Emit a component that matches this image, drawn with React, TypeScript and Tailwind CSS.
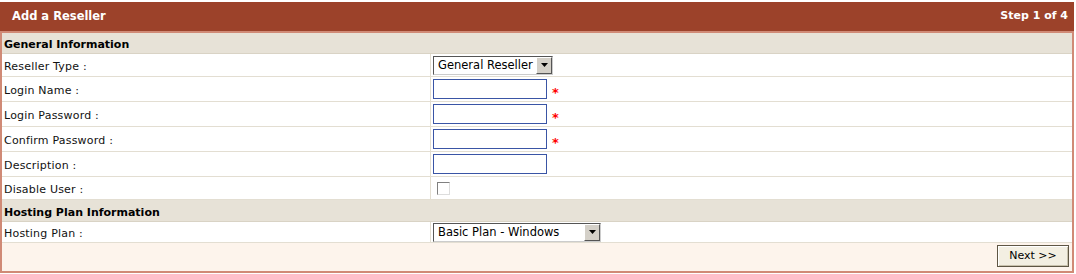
import React from 'react';

const font = { fontFamily: 'Verdana, "DejaVu Sans", sans-serif' };

const Row: React.FC<{ label: string; h: string; children?: React.ReactNode }> = ({ label, h, children }) => (
  <div className={`flex ${h} border-b border-[#e3ded2] bg-white`}>
    <div className="w-[429px] shrink-0 border-r border-[#e3ded2] flex items-center pl-[2px] pt-[4px] text-[11px] text-[#111] tracking-[0.2px]">
      {label}
    </div>
    <div className="flex items-center pl-[2px]">{children}</div>
  </div>
);

const TextBox: React.FC<{ required?: boolean }> = ({ required }) => (
  <div className="flex items-center">
    <input type="text" className="w-[114px] h-[20px] border border-[#3a55a5] bg-white outline-none" />
    {required && <span className="ml-[5px] mt-[6px] text-[#ff0000] text-[13px] font-bold leading-none">*</span>}
  </div>
);

const Select: React.FC<{ value: string; width: string }> = ({ value, width }) => (
  <div className={`flex h-[19px] border border-t-[#555] border-l-[#555] border-r-[#ccc] border-b-[#ccc] bg-white ${width}`}>
    <span className="flex-1 pl-[4px] text-[11.5px] leading-[17px] text-black whitespace-nowrap overflow-hidden">{value}</span>
    <span className="w-[16px] h-[17px] bg-[#d4d0c8] border border-t-white border-l-white border-r-[#555] border-b-[#555] flex items-center justify-center">
      <svg width="7" height="4" viewBox="0 0 7 4"><path d="M0 0h7L3.5 4z" fill="#000" /></svg>
    </span>
  </div>
);

const Section: React.FC<{ title: string; h: string }> = ({ title, h }) => (
  <div className={`${h} flex items-center pl-[2px] pt-[5px] bg-[#e7e2d7] border-b border-[#d9d3c5] text-[11px] font-bold text-black`}>
    {title}
  </div>
);

export default function App() {
  return (
    <div className="w-[1076px] h-[274px] bg-white pt-[2px] pr-[2px]" style={font}>
      <div className="h-[29px] bg-[#9c422a] flex items-center justify-between pl-[12px] pr-[6px] text-white text-[11px] font-bold">
        <span className="text-[11.5px]">Add a Reseller</span>
        <span>Step 1 of 4</span>
      </div>
      <div className="border-x-2 border-b-2 border-t-2 border-[#d08a76] h-[242px] flex flex-col">
        <Section title="General Information" h="h-[21px]" />
        <Row label="Reseller Type :" h="h-[23px]">
          <Select value="General Reseller" width="w-[120px]" />
        </Row>
        <Row label="Login Name :" h="h-[25px]"><TextBox required /></Row>
        <Row label="Login Password :" h="h-[25px]"><TextBox required /></Row>
        <Row label="Confirm Password :" h="h-[25px]"><TextBox required /></Row>
        <Row label="Description :" h="h-[25px]"><TextBox /></Row>
        <Row label="Disable User :" h="h-[23px]">
          <span className="ml-[4px] w-[13px] h-[13px] border border-t-[#808080] border-l-[#808080] border-r-[#ddd] border-b-[#ddd] bg-white" />
        </Row>
        <Section title="Hosting Plan Information" h="h-[22px]" />
        <Row label="Hosting Plan :" h="h-[21px]">
          <Select value="Basic Plan - Windows" width="w-[168px]" />
        </Row>
        <div className="flex-1 bg-[#fdf4ec] flex items-start justify-end pr-[3px] pt-[2px]">
          <button className="w-[72px] h-[22px] border border-[#5e5644] bg-[#f3efe2] text-[11px] text-black shadow-[inset_1px_1px_0_#fff,inset_-1px_-1px_0_#c9c2ad]">
            Next &gt;&gt;
          </button>
        </div>
      </div>
    </div>
  );
}
